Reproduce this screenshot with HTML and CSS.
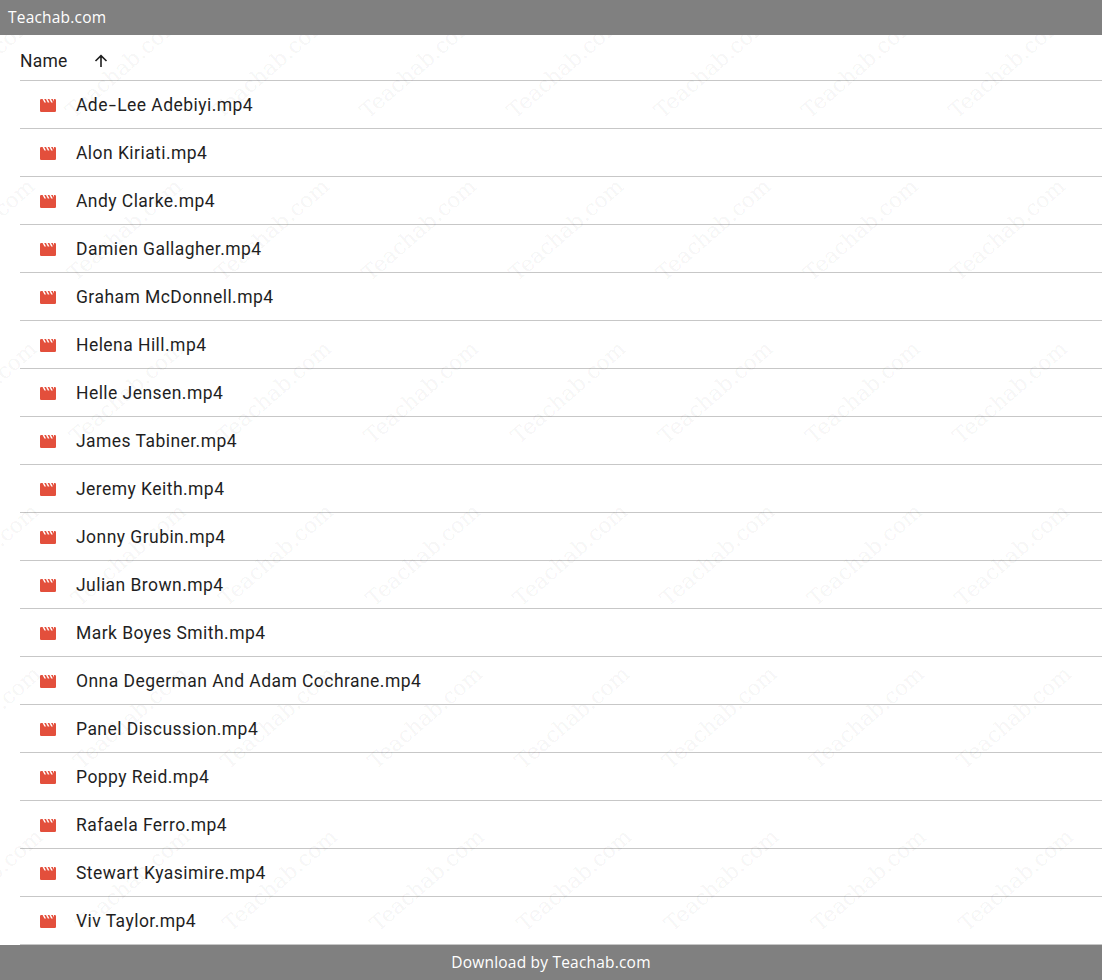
FILE: index.html
```html
<!DOCTYPE html>
<html lang="en">
<head>
  <meta charset="UTF-8">
  <meta name="viewport" content="width=device-width, initial-scale=1.0">
  <title>Teachab.com</title>
  <link rel="stylesheet" href="styles.css">
</head>
<body>
  <header class="top-bar">Teachab.com</header>

  <main class="file-list">
    <div class="list-head">
      <span>Name</span>
      <svg class="sort-icon" viewBox="0 0 14 14">
        <path d="M7 13V2M1.5 7 7 1.6 12.5 7"/>
      </svg>
    </div>
    <ul id="files"></ul>
  </main>

  <svg class="watermark" id="watermark" aria-hidden="true"></svg>

  <footer class="bottom-bar">Download by Teachab.com</footer>

  <script src="script.js"></script>
</body>
</html>
```
FILE: styles.css
```css
body {
  display: flex;
  flex-direction: column;
  height: 980px;
  margin: 0;
  overflow: hidden;
  background-color: #fff;
  color: #1f1f1f;
  font-family: Roboto, sans-serif;
}

.top-bar,
.bottom-bar {
  height: 35px;
  box-sizing: border-box;
  background-color: #808080;
  color: #fff;
  font-family: "Open Sans", sans-serif;
  font-size: 15.5px;
  line-height: 35px;
  letter-spacing: 0.2px;
  position: relative;
  z-index: 2;
}

.top-bar {
  padding-left: 8px;
}

.bottom-bar {
  text-align: center;
}

.file-list {
  height: 910px;
  padding-left: 20px;
  font-size: 17.5px;
  letter-spacing: 0.45px;
}

.list-head {
  display: flex;
  align-items: center;
  gap: 26px;
  height: 46px;
  padding-top: 6px;
  box-sizing: border-box;
  border-bottom: 1px solid #c7c7c7;
}

.list-head span {
  width: 48px;
  letter-spacing: 0.2px;
}

.sort-icon {
  width: 14px;
  height: 14px;
  fill: none;
  stroke: #1f1f1f;
  stroke-width: 1.6;
}

#files {
  margin: 0;
  padding: 0;
  list-style: none;
}

.file {
  display: flex;
  align-items: center;
  gap: 20px;
  height: 48px;
  padding-left: 20px;
  box-sizing: border-box;
  border-bottom: 1px solid #c7c7c7;
}

.file-icon {
  width: 16px;
  height: 13px;
  padding-top: 2px;
  fill: #e34f3c;
}

.hyphen {
  display: inline-block;
  margin: 0 2px;
  transform: scaleX(1.5);
}

/* faint diagonal text laid over the whole list */
.watermark {
  position: absolute;
  top: 0;
  left: 0;
  width: 1102px;
  height: 980px;
  fill: rgba(0, 0, 0, 0.055);
  font-family: "DejaVu Serif", serif;
  font-size: 21.5px;
  pointer-events: none;
}
```
FILE: script.js
```js
const files = [
  'Ade-Lee Adebiyi.mp4',
  'Alon Kiriati.mp4',
  'Andy Clarke.mp4',
  'Damien Gallagher.mp4',
  'Graham McDonnell.mp4',
  'Helena Hill.mp4',
  'Helle Jensen.mp4',
  'James Tabiner.mp4',
  'Jeremy Keith.mp4',
  'Jonny Grubin.mp4',
  'Julian Brown.mp4',
  'Mark Boyes Smith.mp4',
  'Onna Degerman And Adam Cochrane.mp4',
  'Panel Discussion.mp4',
  'Poppy Reid.mp4',
  'Rafaela Ferro.mp4',
  'Stewart Kyasimire.mp4',
  'Viv Taylor.mp4'
];

const icon = `<svg class="file-icon" viewBox="0 0 16 13">
  <path d="M0 1.2Q0 0 1.2 0H2.6L4.4 3.4H6L4.2 0H6L7.8 3.4H9.4L7.6 0H9.4L11.2 3.4H12.8L11 0H12.8L14 2.4L14 0H14.8Q16 0 16 1.2V11.8Q16 13 14.8 13H1.2Q0 13 0 11.8Z"/>
</svg>`;

document.getElementById('files').innerHTML = files
  .map(name => name.replace('-', '<span class="hyphen">-</span>'))
  .map(name => `<li class="file">${icon}<span>${name}</span></li>`)
  .join('');

// Repeat the watermark on a slightly slanted grid
const marks = [];
for (let row = 0; row < 6; row++) {
  for (let col = -1; col < 7; col++) {
    const x = 73.5 + col * 147.2 + row * 2;
    const y = 119.5 + row * 162.6;
    marks.push(`<text transform="translate(${x} ${y}) rotate(-41)">Teachab.com</text>`);
  }
}
document.getElementById('watermark').innerHTML = marks.join('');
```
